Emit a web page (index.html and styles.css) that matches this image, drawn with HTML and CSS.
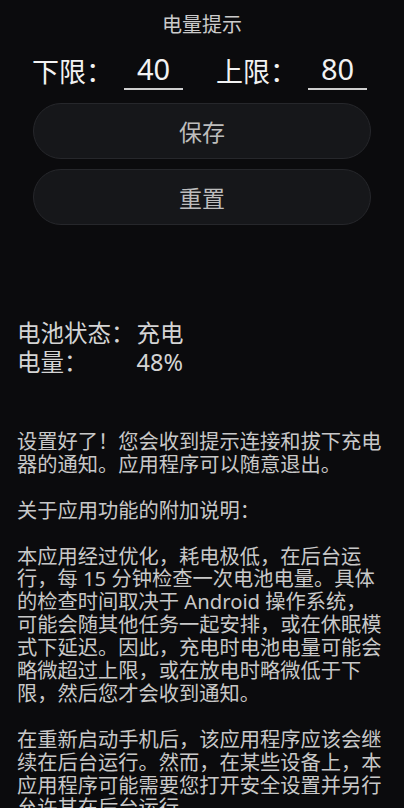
FILE: index.html
```html
<!DOCTYPE html>
<html lang="zh-CN">
<head>
    <meta charset="UTF-8">
    <meta name="viewport" content="width=device-width, initial-scale=1.0">
    <title>电量提示</title>
    <link rel="stylesheet" href="styles.css">
</head>
<body>
    <div class="container">
        <h1 class="title">电量提示</h1>

        <div class="limits">
            <span class="limit-label">下限：</span>
            <span class="limit-field">40</span>
            <span class="limit-label second">上限：</span>
            <span class="limit-field">80</span>
        </div>

        <button class="pill-btn save-btn">保存</button>
        <button class="pill-btn reset-btn">重置</button>

        <div class="status">
            <span>电池状态：</span><span>充电</span>
            <span>电量：</span><span>48%</span>
        </div>

        <div class="notes">
            <p>设置好了！您会收到提示连接和拔下充电器的通知。应用程序可以随意退出。</p>
            <p>关于应用功能的附加说明：</p>
            <p>本应用经过优化，耗电极低，在后台运行，每 15 分钟检查一次电池电量。具体的检查时间取决于 Android 操作系统，可能会随其他任务一起安排，或在休眠模式下延迟。因此，充电时电池电量可能会略微超过上限，或在放电时略微低于下限，然后您才会收到通知。</p>
            <p>在重新启动手机后，该应用程序应该会继续在后台运行。然而，在某些设备上，本应用程序可能需要您打开安全设置并另行允许其在后台运行。</p>
        </div>
    </div>
</body>
</html>
```

FILE: styles.css
```css
* {
    margin: 0;
    padding: 0;
    box-sizing: border-box;
}

body {
    font-family: "Noto Sans", "Noto Sans CJK SC", sans-serif;
    background-color: #0b0b0d;
    color: #c8c8c8;
}

.container {
    display: flex;
    flex-direction: column;
    padding: 0 17px;
}

.title {
    font-size: 20px;
    font-weight: normal;
    line-height: 28px;
    text-align: center;
    color: #cbcbcb;
    padding-top: 11px;
}

.limits {
    display: flex;
    align-items: center;
    height: 40px;
    margin: 11px 0 0 15px;
}

.limit-label {
    font-size: 27px;
    color: #f2f2f2;
}

.limit-label.second {
    margin-left: 33px;
}

.limit-field {
    width: 59px;
    height: 40px;
    margin-left: 11px;
    border-bottom: 2px solid #cfcfcf;
    font-size: 29px;
    line-height: 38px;
    text-align: center;
    color: #f2f2f2;
}

.pill-btn {
    height: 56px;
    margin: 13px 16px 0;
    border: 1px solid #26272b;
    border-radius: 28px;
    background-color: #16171a;
    color: #bdbdbd;
    font-family: inherit;
    font-size: 23px;
}

.reset-btn {
    margin-top: 10px;
}

/* battery info, two columns */
.status {
    display: grid;
    grid-template-columns: auto 1fr;
    column-gap: 2px;
    margin-top: 94px;
    font-size: 23.5px;
    line-height: 29px;
    color: #d4d4d4;
}

.notes {
    margin: 53px 4px 0 0;
    font-size: 20.25px;
    line-height: 22.9px;
    text-spacing-trim: space-all;
}

.notes p {
    margin-bottom: 22.9px;
}
```
